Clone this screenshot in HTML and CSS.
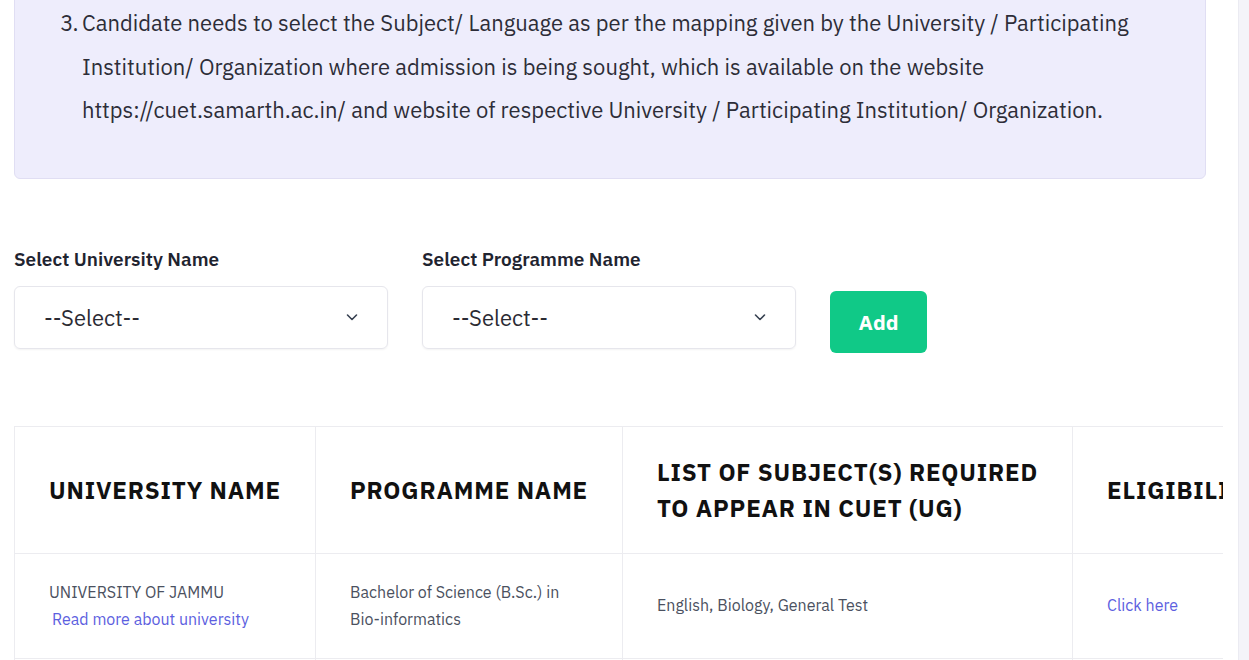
FILE: index.html
```html
<!DOCTYPE html>
<html lang="en">
<head>
    <meta charset="UTF-8">
    <meta name="viewport" content="width=device-width, initial-scale=1.0">
    <title>CUET (UG) - Subject Mapping</title>
    <link rel="stylesheet" href="styles.css">
</head>
<body>
    <div class="page">
        <div class="main">
            <div class="notice">
                <ol start="3">
                    <li>Candidate needs to select the Subject/ Language as per the mapping given by the University / Participating Institution/ Organization where admission is being sought, which is available on the website https://cuet.samarth.ac.in/ and website of respective University / Participating Institution/ Organization.</li>
                </ol>
            </div>

            <div class="filters">
                <div class="field">
                    <label>Select University Name</label>
                    <div class="select">
                        <span>--Select--</span>
                        <svg width="14" height="14" viewBox="0 0 14 14"><path d="M2.5 5l4.5 4.5L11.5 5" fill="none" stroke="#374151" stroke-width="1.6" stroke-linecap="round" stroke-linejoin="round"/></svg>
                    </div>
                </div>
                <div class="field">
                    <label>Select Programme Name</label>
                    <div class="select">
                        <span>--Select--</span>
                        <svg width="14" height="14" viewBox="0 0 14 14"><path d="M2.5 5l4.5 4.5L11.5 5" fill="none" stroke="#374151" stroke-width="1.6" stroke-linecap="round" stroke-linejoin="round"/></svg>
                    </div>
                </div>
                <button class="btn-add">Add</button>
            </div>

            <div class="table-wrap">
                <table>
                    <thead>
                        <tr>
                            <th class="col-uni">University Name</th>
                            <th class="col-prog">Programme Name</th>
                            <th class="col-subj">List of Subject(s) Required to Appear in CUET (UG)</th>
                            <th class="col-elig">Eligibility Criteria</th>
                        </tr>
                    </thead>
                    <tbody>
                        <tr>
                            <td>UNIVERSITY OF JAMMU<br><a href="#" class="more">Read more about university</a></td>
                            <td>Bachelor of Science (B.Sc.) in Bio-informatics</td>
                            <td>English, Biology, General Test</td>
                            <td><a href="#" class="click">Click here</a></td>
                        </tr>
                        <tr>
                            <td>&nbsp;</td>
                            <td>&nbsp;</td>
                            <td>&nbsp;</td>
                            <td>&nbsp;</td>
                        </tr>
                    </tbody>
                </table>
            </div>
        </div>
        <div class="side"></div>
    </div>
</body>
</html>
```

FILE: styles.css
```css
body {
    margin: 0;
    font-family: "IBM Plex Sans", Roboto, "Noto Sans", sans-serif;
    color: #2b2b36;
    background-color: #fff;
    overflow: hidden;
}
.page {
    display: flex;
    height: 660px;
}
.main {
    flex: 1;
    padding: 0 15px 0 14px;
    overflow: hidden;
}
.side {
    width: 10px;
    background-color: #f4f4f9;
    border-left: 1px solid #ebebf2;
}
.notice {
    margin-top: -30px;
    margin-right: 17px;
    padding: 30px 40px 46px 40px;
    background-color: #eeedfc;
    border: 1px solid #e0def3;
    border-radius: 6px;
    font-size: 22px;
    line-height: 43.5px;
    color: #2d2d38;
}
.notice ol {
    margin: 0;
    padding-left: 27px;
}
.notice li::marker {
    letter-spacing: -0.04em;
}
.filters {
    display: flex;
    align-items: flex-start;
    gap: 34px;
    margin-top: 69px;
}
.field label {
    display: block;
    font-size: 19px;
    font-weight: 600;
    color: #1f2430;
    line-height: 22px;
    margin-bottom: 16px;
}
.select {
    box-sizing: border-box;
    width: 374px;
    height: 63px;
    padding: 0 28px 0 29px;
    display: flex;
    align-items: center;
    justify-content: space-between;
    border: 1px solid #e6e6ec;
    border-radius: 6px;
    box-shadow: 0 1px 2px rgba(0, 0, 0, 0.05);
    font-size: 22px;
    color: #2b2b33;
}
.btn-add {
    margin-top: 43px;
    width: 97px;
    height: 62px;
    background-color: #10c987;
    color: #fff;
    border: none;
    border-radius: 6px;
    font-family: inherit;
    font-size: 21px;
    font-weight: 700;
    cursor: pointer;
}
.table-wrap {
    margin-top: 73px;
    overflow: hidden;
}
table {
    border-collapse: collapse;
    width: 1500px;
    table-layout: fixed;
}
th, td {
    border: 1px solid #ececf0;
    text-align: left;
    vertical-align: middle;
}
th {
    padding: 27px 28px 27px 34px;
    font-size: 24px;
    line-height: 36px;
    font-weight: 700;
    letter-spacing: 0.035em;
    text-transform: uppercase;
    white-space: nowrap;
    color: #111;
}
th.col-subj {
    white-space: normal;
}
td {
    padding: 25px 34px;
    font-size: 16px;
    line-height: 27px;
    color: #4b5160;
}
.col-uni { width: 238px; }
.col-prog { width: 244px; }
.col-subj { width: 387px; }
a {
    color: #5d5fe0;
    text-decoration: none;
}
.more {
    padding-left: 3px;
}
```
